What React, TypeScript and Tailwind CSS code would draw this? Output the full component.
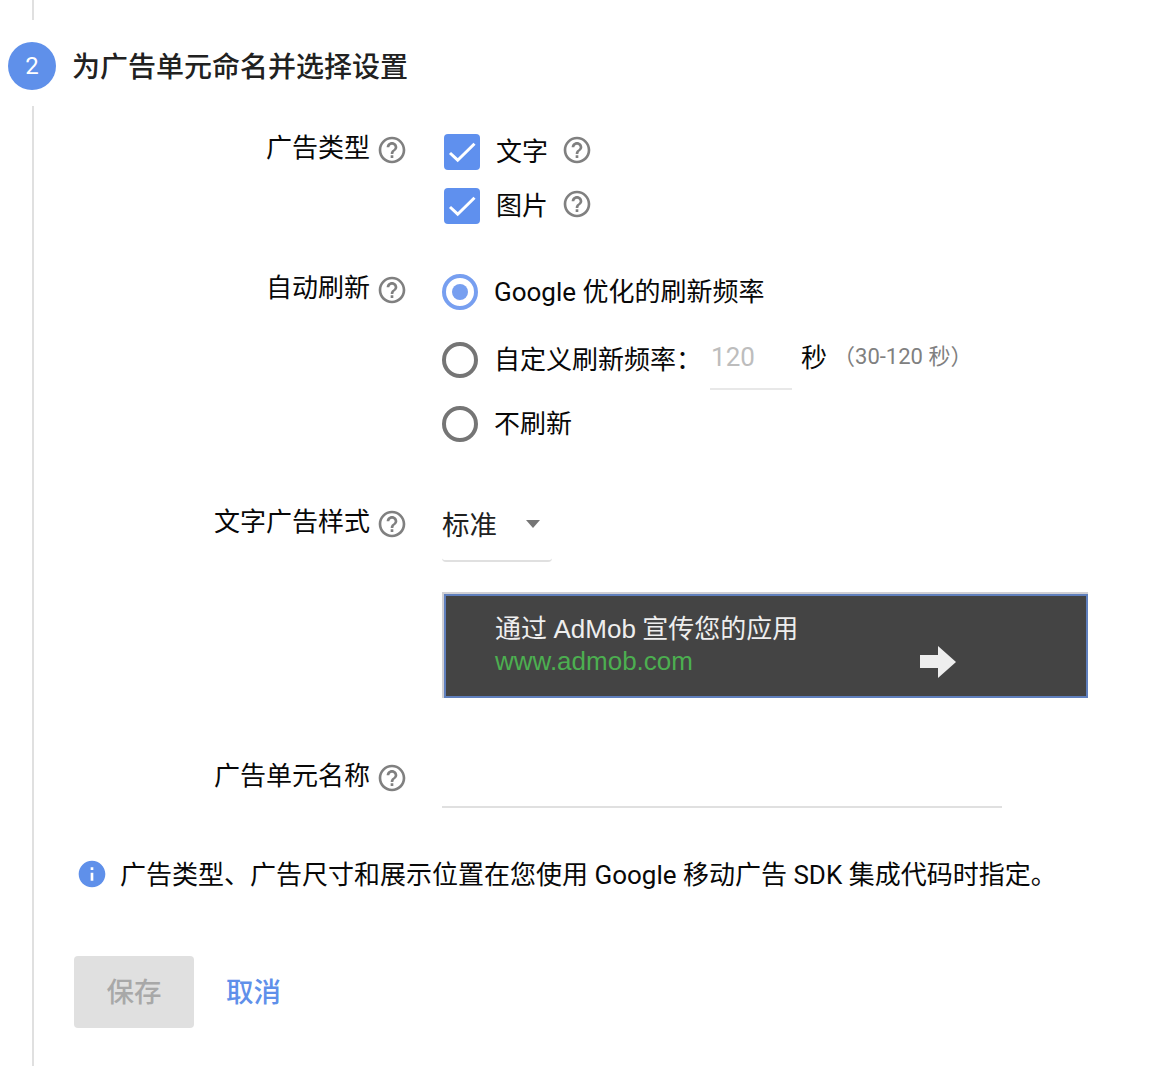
import { useState } from "react";
import type { ReactNode } from "react";

type Refresh = "google" | "custom" | "none";

const HelpIcon = () => (
  <svg viewBox="0 0 24 24" className="size-8 shrink-0 fill-[#808080]">
    <path d="M11 18h2v-2h-2v2zm1-16C6.48 2 2 6.48 2 12s4.48 10 10 10 10-4.48 10-10S17.52 2 12 2zm0 18c-4.41 0-8-3.59-8-8s3.59-8 8-8 8 3.59 8 8-3.59 8-8 8zm0-14c-2.21 0-4 1.79-4 4h2c0-1.1.9-2 2-2s2 .9 2 2c0 2-3 1.75-3 5h2c0-2.25 3-2.5 3-5 0-2.21-1.79-4-4-4z" />
  </svg>
);

function Row({
  label,
  className,
  children,
}: {
  label: string;
  className: string;
  children: ReactNode;
}) {
  return (
    <div className={`flex items-start ${className}`}>
      <div className="flex w-[344px] shrink-0 justify-end gap-1.5">
        <span className="-mt-0.5 leading-8">{label}</span>
        <HelpIcon />
      </div>
      <div className="ml-[34px]">{children}</div>
    </div>
  );
}

function Checkbox({ label }: { label: string }) {
  const [checked, setChecked] = useState(true);

  return (
    <div className="flex h-9 items-center">
      <button
        role="checkbox"
        aria-checked={checked}
        aria-label={label}
        onClick={() => setChecked(!checked)}
        className="ml-0.5 size-9 shrink-0 cursor-pointer rounded-[4px] bg-[#5f90ee]"
      >
        {checked && (
          <svg viewBox="0 0 36 36" className="size-9">
            <path
              d="M6 19L13.7 26.2L30.5 9.7"
              fill="none"
              stroke="#fff"
              strokeWidth="3"
            />
          </svg>
        )}
      </button>
      <span className="ml-4 w-[65px] leading-8">{label}</span>
      <span className="-mt-1">
        <HelpIcon />
      </span>
    </div>
  );
}

function Radio({
  label,
  checked,
  onSelect,
}: {
  label: string;
  checked: boolean;
  onSelect: () => void;
}) {
  return (
    <div className="flex h-9 items-center">
      <button
        role="radio"
        aria-checked={checked}
        aria-label={label}
        onClick={onSelect}
        className={`flex size-9 shrink-0 cursor-pointer items-center justify-center rounded-full border-4 ${
          checked ? "border-[#779ff0]" : "border-[#757575]"
        }`}
      >
        {checked && <span className="size-4 rounded-full bg-[#779ff0]" />}
      </button>
      <span className="ml-4 leading-8 whitespace-nowrap">{label}</span>
    </div>
  );
}

export default function App() {
  const [refresh, setRefresh] = useState<Refresh>("google");

  return (
    <div className="flex h-[1066px] w-[1160px] overflow-hidden bg-white font-['Roboto','Noto_Sans_CJK_SC',sans-serif] text-[26px] text-[#080808]">
      {/* Step rail */}
      <div className="flex w-16 shrink-0 flex-col">
        <div className="ml-8 h-5 w-0.5 bg-[#e0e0e0]" />
        <div className="mt-[22px] ml-2 flex size-12 items-center justify-center rounded-full bg-[#5f90ea] text-2xl text-white">
          2
        </div>
        <div className="mt-4 ml-8 w-0.5 flex-1 bg-[#e0e0e0]" />
      </div>

      <div className="flex-1">
        <h2 className="mt-11 ml-2 text-[28px] leading-[48px] font-medium text-[#212121]">
          为广告单元命名并选择设置
        </h2>

        <Row label="广告类型" className="mt-[42px] h-[140px]">
          <div className="flex flex-col gap-[18px]">
            <Checkbox label="文字" />
            <Checkbox label="图片" />
          </div>
        </Row>

        <Row label="自动刷新" className="h-[234px]">
          <Radio
            label="Google 优化的刷新频率"
            checked={refresh === "google"}
            onSelect={() => setRefresh("google")}
          />
          <div className="mt-8 flex">
            <Radio
              label="自定义刷新频率："
              checked={refresh === "custom"}
              onSelect={() => setRefresh("custom")}
            />
            <input
              defaultValue="120"
              aria-label="自定义刷新频率"
              className="-mt-4 ml-2 h-16 w-[82px] border-b-2 border-[#e8e8e8] pl-px text-[#bdbdbd] outline-none"
            />
            <span className="ml-[9px] leading-8">秒</span>
            <span className="ml-1.5 text-[22px] leading-[30px] text-[#808080]">
              （30-120 秒）
            </span>
          </div>
          <div className="mt-4">
            <Radio
              label="不刷新"
              checked={refresh === "none"}
              onSelect={() => setRefresh("none")}
            />
          </div>
        </Row>

        <Row label="文字广告样式" className="h-[254px]">
          <button className="-mt-2 flex h-[62px] w-[110px] cursor-pointer items-start rounded-[4px] border-b-2 border-[#e0e0e0] text-[27.5px] text-[#212121]">
            <span className="mt-[5px] leading-[42px]">标准</span>
            <svg viewBox="0 0 14 8" className="mt-5 ml-[29px] h-2 w-3.5">
              <path d="M0 0h14L7 8z" fill="#757575" />
            </svg>
          </button>
          <div className="mt-[30px] w-[646px] border-t-2 border-l-2 border-[#d0d0d4]">
            <div className="flex h-[104px] border-2 border-[#5f7fbd] bg-[#444] pl-[49px]">
              <div className="mt-[17px] w-[425px] text-[#eee]">
                <p className="leading-8">
                  通过{" "}
                  <span className="font-['Liberation_Sans']">AdMob</span>{" "}
                  宣传您的应用
                </p>
                <p className="font-['Liberation_Sans'] leading-8 text-[#4caf50]">
                  www.admob.com
                </p>
              </div>
              <svg viewBox="0 0 36 32" className="mt-[50px] h-8 w-9">
                <path d="M0 9h18V0l18 16-18 16V22H0z" fill="#eee" />
              </svg>
            </div>
          </div>
        </Row>

        <Row label="广告单元名称" className="h-[96px]">
          <input
            aria-label="广告单元名称"
            className="-mt-2.5 block h-14 w-[560px] border-b-2 border-[#e0e0e0] outline-none"
          />
        </Row>

        <div className="ml-3 flex h-8 items-center">
          <svg viewBox="0 0 24 24" className="size-8 fill-[#5f90ea]">
            <path d="M12 2C6.48 2 2 6.48 2 12s4.48 10 10 10 10-4.48 10-10S17.52 2 12 2zm1 15h-2v-6h2v6zm0-8h-2V7h2v2z" />
          </svg>
          <p className="mt-0.5 ml-3 leading-8 whitespace-nowrap">
            广告类型、广告尺寸和展示位置在您使用 Google 移动广告 SDK
            集成代码时指定。
          </p>
        </div>

        <div className="mt-[66px] ml-2.5 flex gap-8 text-[27.5px] font-medium">
          <button
            disabled
            className="h-[72px] w-[120px] rounded-[4px] bg-[#e0e0e0] pt-0.5 text-[#a8a8a8]"
          >
            保存
          </button>
          <button className="cursor-pointer pt-0.5 text-[#5f90ea]">取消</button>
        </div>
      </div>
    </div>
  );
}
